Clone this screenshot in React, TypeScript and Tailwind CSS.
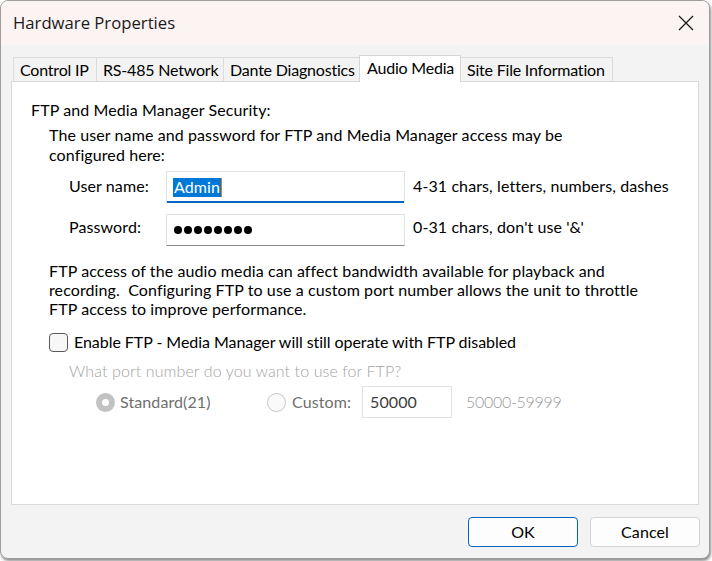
const tabs = [
    { label: 'Control IP', width: 'w-[84px]' },
    { label: 'RS-485 Network', width: 'w-[128px]' },
    { label: 'Dante Diagnostics', width: 'w-[137px]' },
    { label: 'Audio Media', width: 'w-[102px]', active: true },
    { label: 'Site File Information', width: 'w-[153px]' },
];

const ui = "font-['Lato',sans-serif] tracking-[0.1px] text-[16px]";

function CloseIcon() {
    return (
        <svg width="16" height="16" viewBox="0 0 16 16" className="text-[#1a1a1a]">
            <path d="M1 1 L15 15 M15 1 L1 15" stroke="currentColor" strokeWidth="1.3" fill="none" />
        </svg>
    );
}

function Tab({ label, width, active }: { label: string; width: string; active?: boolean }) {
    if (active) {
        return (
            <div
                className={`${width} relative z-10 -mb-px -ml-px flex h-[27px] items-center whitespace-nowrap border border-b-0 border-[#d6d6d6] bg-white pb-[2px] pl-[7px] tracking-[-0.2px] text-black`}
            >
                {label}
            </div>
        );
    }
    return (
        <div
            className={`${width} -ml-px flex h-[24px] items-center overflow-hidden whitespace-nowrap border border-b-0 border-[#dcdcdc] bg-[#f3f3f3] pl-[6px] tracking-[-0.2px] text-black first:ml-0`}
        >
            {label}
        </div>
    );
}

export default function App() {
    return (
        <div className="h-[561px] w-[712px] bg-white">
            <div
                className={`${ui} flex h-[559px] w-[710px] flex-col overflow-hidden rounded-[8px] border border-[#9d9d9d] bg-[#f3f3f3] shadow-[1px_2px_3px_rgba(0,0,0,0.45)]`}
            >
                {/* title bar */}
                <div className="flex h-[44px] shrink-0 items-center justify-between bg-[#fcf3f3] pl-[12px] pr-[15px]">
                    <span className="font-['Open_Sans',sans-serif] text-[16.7px] tracking-normal text-[#1a1a1a]">
                        Hardware Properties
                    </span>
                    <CloseIcon />
                </div>

                <div className="flex flex-col px-[10px] pt-[10px]">
                    {/* tab strip */}
                    <div className="flex h-[26px] items-end pl-[2px]">
                        {tabs.map((t) => (
                            <Tab key={t.label} label={t.label} width={t.width} active={t.active} />
                        ))}
                    </div>

                    {/* Audio Media page */}
                    <div className="flex h-[424px] flex-col border border-[#dadada] bg-white pl-[19px] pt-[18px] text-black">
                        <div className="leading-[20px]">FTP and Media Manager Security:</div>

                        <div className="ml-[18px] mt-[5px] flex flex-col">
                            <p className="leading-[20px]">
                                The user name and password for FTP and Media Manager access may be
                                <br />
                                configured here:
                            </p>

                            <div className="ml-[20px] mt-[6px] flex flex-col gap-[11px]">
                                <div className="flex items-center">
                                    <span className="w-[97px] pb-[3px]">User name:</span>
                                    <div className="flex h-[32px] w-[239px] items-center border border-b-0 border-[#e3e3e3] shadow-[inset_0_-2px_0_#0067c0] pb-[1px] pl-[6px]">
                                        <span className="flex h-[19px] items-center bg-[#0078d7] px-[1px] text-white leading-none">
                                            Admin
                                        </span>
                                        <span className="h-[19px] w-[1px] bg-[#e07a1f]" />
                                    </div>
                                    <span className="ml-[8px] pb-[3px]">4-31 chars, letters, numbers, dashes</span>
                                </div>

                                <div className="flex items-center">
                                    <span className="w-[97px] pb-[7px]">Password:</span>
                                    <div className="flex h-[32px] w-[239px] items-center gap-[2px] border border-[#e3e3e3] border-b-[#8a8a8a] pb-[1px] pl-[7px]">
                                        {Array.from({ length: 8 }).map((_, i) => (
                                            <span key={i} className="h-[8px] w-[8px] rounded-full bg-black" />
                                        ))}
                                    </div>
                                    <span className="ml-[8px] pb-[7px]">0-31 chars, don't use '&amp;'</span>
                                </div>
                            </div>

                            <p className="mt-[15px] leading-[19px]">
                                FTP access of the audio media can affect bandwidth available for playback and
                                <br />
                                recording.&nbsp; Configuring FTP to use a custom port number allows the unit to throttle
                                <br />
                                FTP access to improve performance.
                            </p>

                            <label className="mt-[14px] flex h-[20px] items-center">
                                <span className="h-[19px] w-[19px] rounded-[4px] border border-[#5a5a5a] bg-[#f7f7f7]" />
                                <span className="ml-[6px] tracking-[-0.05px]">
                                    Enable FTP - Media Manager will still operate with FTP disabled
                                </span>
                            </label>

                            <div className="ml-[20px] mt-[9px] flex flex-col">
                                <div className="font-light leading-[20px] text-[#a3a3a3]">
                                    What port number do you want to use for FTP?
                                </div>

                                <div className="ml-[27px] mt-[5px] flex h-[32px] items-center text-[#6f6f6f]">
                                    <span className="flex h-[19px] w-[19px] items-center justify-center rounded-full bg-[#c2c2c2]">
                                        <span className="h-[7px] w-[7px] rounded-full bg-white" />
                                    </span>
                                    <span className="ml-[5px] w-[147px]">Standard(21)</span>

                                    <span className="h-[19px] w-[19px] rounded-full border border-[#c6c6c6] bg-[#fafafa]" />
                                    <span className="ml-[6px] w-[70px]">Custom:</span>

                                    <div className="flex h-[32px] w-[90px] items-center border border-[#e2e2e2] pl-[7px] text-[#3c3c3c]">
                                        50000
                                    </div>
                                    <span className="ml-[14px] font-light tracking-[-0.3px] text-[#9a9a9a]">50000-59999</span>
                                </div>
                            </div>
                        </div>
                    </div>

                    {/* dialog buttons */}
                    <div className="-mr-px mt-[12px] flex justify-end gap-[12px]">
                        <button className="h-[30px] w-[110px] rounded-[4px] border border-[#0067c0] bg-[#fdfdfd] text-black">
                            OK
                        </button>
                        <button className="h-[30px] w-[110px] rounded-[4px] border border-[#d3d3d3] bg-[#fdfdfd] text-black">
                            Cancel
                        </button>
                    </div>
                </div>
            </div>
        </div>
    );
}
